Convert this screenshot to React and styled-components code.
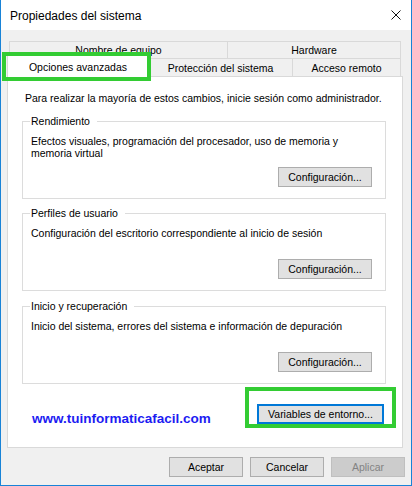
import styled, { createGlobalStyle } from 'styled-components';

const GlobalStyle = createGlobalStyle`
  body {
    margin: 0;
    background: #fff;
    font-family: "Liberation Sans", Arial, sans-serif;
  }
  * {
    box-sizing: border-box;
  }
`;

export default function App() {
  return (
    <>
      <GlobalStyle />
      <Window>
        <TitleBar>
          <Title>Propiedades del sistema</Title>
          <svg width="10" height="10" viewBox="0 0 10 10">
            <path d="M0.5 0.5L9.5 9.5M9.5 0.5L0.5 9.5" stroke="#111" strokeWidth="1" fill="none" />
          </svg>
        </TitleBar>

        <Tabs>
          <TabRow $indent={8}>
            <Tab $w={219} $back>Nombre de equipo</Tab>
            <Tab $w={174} $back>Hardware</Tab>
          </TabRow>
          <TabRow $indent={6} $top={-1}>
            <Tab $w={142} $active>
              Opciones avanzadas
              <Highlight />
            </Tab>
            <Tab $w={145}>Protección del sistema</Tab>
            <Tab $w={109}>Acceso remoto</Tab>
          </TabRow>
        </Tabs>

        <Panel>
          <Info>Para realizar la mayoría de estos cambios, inicie sesión como administrador.</Info>

          <Group $gap={9}>
            <Legend>Rendimiento</Legend>
            <GroupBody>
              <Desc>Efectos visuales, programación del procesador, uso de memoria y memoria virtual</Desc>
              <Button $w={94}>Configuración...</Button>
            </GroupBody>
          </Group>

          <Group $gap={7}>
            <Legend>Perfiles de usuario</Legend>
            <GroupBody>
              <Desc>Configuración del escritorio correspondiente al inicio de sesión</Desc>
              <Button $w={94}>Configuración...</Button>
            </GroupBody>
          </Group>

          <Group $gap={8}>
            <Legend>Inicio y recuperación</Legend>
            <GroupBody>
              <Desc>Inicio del sistema, errores del sistema e información de depuración</Desc>
              <Button $w={94}>Configuración...</Button>
            </GroupBody>
          </Group>

          <PanelFooter>
            <Site>www.tuinformaticafacil.com</Site>
            <GreenBox>
              <Button $w={127} $focused>Variables de entorno...</Button>
            </GreenBox>
          </PanelFooter>
        </Panel>

        <Actions>
          <Button $w={74}>Aceptar</Button>
          <Button $w={74}>Cancelar</Button>
          <Button $w={74} disabled>Aplicar</Button>
        </Actions>
      </Window>
    </>
  );
}

const Window = styled.div`
  width: 412px;
  height: 486px;
  display: flex;
  flex-direction: column;
  background: #f0f0f0;
  border: 1px solid #1883d7;
  border-top: none;
  color: #000;
  font-family: "Liberation Sans", Arial, sans-serif;
`;

const TitleBar = styled.div`
  height: 30px;
  flex-shrink: 0;
  display: flex;
  align-items: center;
  justify-content: space-between;
  padding: 0 10px 0 9px;
  background: #fff;
`;

const Title = styled.span`
  font-size: 12px;
  padding-top: 2px;
`;

const Tabs = styled.div`
  margin-top: 11px;
  display: flex;
  flex-direction: column;
`;

const TabRow = styled.div`
  display: flex;
  align-items: flex-end;
  height: 18px;
  margin-left: ${p => p.$indent}px;
  margin-top: ${p => p.$top || 0}px;
`;

const Tab = styled.div`
  position: relative;
  width: ${p => p.$w}px;
  height: ${p => (p.$active ? 22 : 18)}px;
  margin-bottom: ${p => (p.$active ? -1 : 0)}px;
  z-index: ${p => (p.$active ? 1 : 0)};
  display: flex;
  align-items: center;
  justify-content: center;
  border: 1px solid #d9d9d9;
  border-bottom: ${p => (p.$back ? '1px solid #d9d9d9' : 'none')};
  background: ${p => (p.$active ? '#fff' : '#f0f0f0')};
  font-size: 10.5px;
  white-space: nowrap;

  & + & {
    margin-left: -1px;
  }
`;

const Highlight = styled.span`
  position: absolute;
  left: -6px;
  top: -4px;
  width: 149px;
  height: 29px;
  border: 4px solid #33cc33;
  pointer-events: none;
`;

const Panel = styled.div`
  margin-left: 6px;
  width: 396px;
  height: 372px;
  flex-shrink: 0;
  display: flex;
  flex-direction: column;
  background: #fff;
  border: 1px solid #d9d9d9;
  padding: 14px 16px 0 14px;
`;

const Info = styled.div`
  margin-left: 3px;
  font-size: 10.5px;
  line-height: 14px;
  white-space: nowrap;
`;

const Group = styled.fieldset`
  margin: ${p => p.$gap}px 0 0;
  padding: 7px 13px 11px 8px;
  border: 1px solid #dcdcdc;
  min-width: 0;
`;

const Legend = styled.legend`
  margin-left: -1px;
  padding: 0 7px 0 1px;
  font-size: 10.5px;
  line-height: 14px;
`;

const GroupBody = styled.div`
  height: 52px;
  display: flex;
  flex-direction: column;
  justify-content: space-between;
`;

const Desc = styled.div`
  font-size: 10.5px;
  line-height: 12px;
  max-width: 330px;
`;

const Button = styled.button`
  flex-shrink: 0;
  align-self: flex-end;
  width: ${p => p.$w}px;
  height: 20px;
  padding: 0;
  background: ${p => (p.disabled ? '#cccccc' : '#e1e1e1')};
  border: ${p => (p.$focused ? '2px solid #0078d7' : p.disabled ? '1px solid #bfbfbf' : '1px solid #adadad')};
  color: ${p => (p.disabled ? '#838383' : '#000')};
  font-family: "Liberation Sans", Arial, sans-serif;
  font-size: 10.5px;
`;

const PanelFooter = styled.div`
  display: flex;
  justify-content: space-between;
  align-items: flex-start;
  margin: 3px -10px 0 10px;
`;

const Site = styled.div`
  margin-top: 24px;
  font-size: 13.5px;
  line-height: 16px;
  font-weight: bold;
  color: #1c1cf2;
`;

const GreenBox = styled.div`
  width: 151px;
  height: 41px;
  display: flex;
  justify-content: center;
  align-items: flex-start;
  padding-top: 7px;
  border: 4px solid #33cc33;
`;

const Actions = styled.div`
  display: flex;
  justify-content: flex-end;
  gap: 7px;
  margin-top: 9px;
  padding-right: 6px;
`;
